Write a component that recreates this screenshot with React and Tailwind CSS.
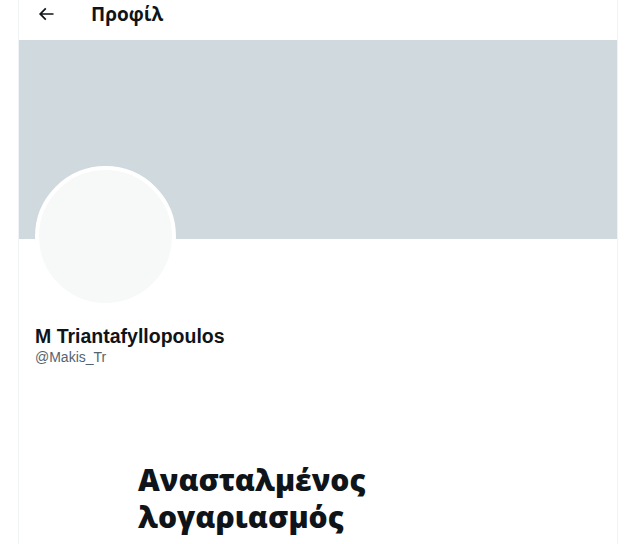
import React from 'react';

const ArrowLeft = () => (
  <svg viewBox="0 0 24 24" className="w-[20px] h-[20px]" fill="#0f1419">
    <path d="M7.414 13l5.043 5.04-1.414 1.42L3.586 12l7.457-7.46 1.414 1.42L7.414 11H21v2H7.414z" />
  </svg>
);

const App = () => {
  return (
    <div className="w-[635px] h-[544px] bg-white overflow-hidden" style={{ fontFamily: '"Liberation Sans", Arial, sans-serif' }}>
      <div className="ml-[18px] w-[600px] h-[544px] border-x border-[#eff3f4] flex flex-col">
        {/* Header */}
        <div className="h-[40px] flex items-start pt-[4px]">
          <div className="w-[56px] pl-[17px] h-[20px] flex items-center">
            <ArrowLeft />
          </div>
          <div
            className="ml-[16px] text-[19px] font-bold text-[#0f1419] leading-[20px]"
            style={{ fontFamily: '"Open Sans", "Noto Sans", sans-serif' }}
          >
            Προφίλ
          </div>
        </div>

        {/* Banner */}
        <div className="h-[199px] bg-[#cfd9de]" />

        {/* Profile */}
        <div className="px-[16px]">
          <div className="-mt-[73px] w-[141px] h-[141px] rounded-full bg-[#f7f9f9] border-4 border-white" />
          <div className="mt-[17px] text-[19.5px] font-bold text-[#0f1419] leading-[24px]">M Triantafyllopoulos</div>
          <div className="text-[14px] text-[#536471] leading-[18px]">@Makis_Tr</div>
        </div>

        {/* Suspended message */}
        <div className="pl-[119px] mt-[95px]">
          <div
            className="text-[30px] font-extrabold text-[#0f1419] leading-[37px] w-[260px]"
            style={{ fontFamily: '"Open Sans", "Noto Sans", sans-serif' }}
          >
            Ανασταλμένος λογαριασμός
          </div>
        </div>
      </div>
    </div>
  );
};

export default App;
